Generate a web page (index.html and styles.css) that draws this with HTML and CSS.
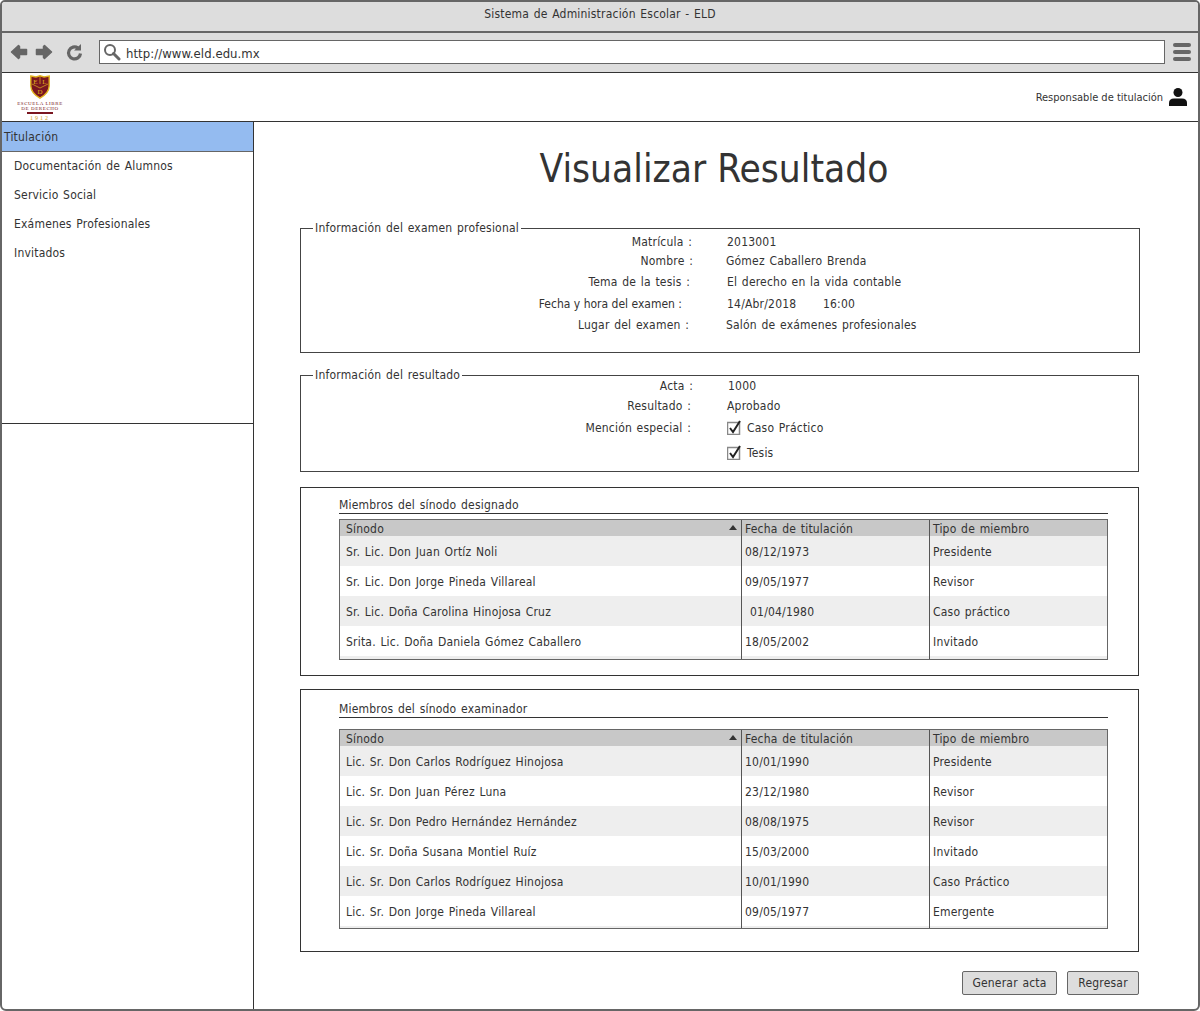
FILE: index.html
```html
<!DOCTYPE html>
<html lang="es">
<head>
<meta charset="utf-8">
<title>Visualizar Resultado</title>
<link rel="stylesheet" href="styles.css">
</head>
<body>
<div class="window">
  <div class="titlebar">Sistema de Administración Escolar - ELD</div>
  <div class="toolbar">
    <svg class="nav" width="76" height="20" viewBox="0 0 76 20" aria-hidden="true">
      <path d="M1.500 10 L8.500 3.500 L9.500 4.500 L9.500 7.500 L16.500 7.500 L16.500 12.500 L9.500 12.500 L9.500 15.500 L8.500 16.500 Z" fill="#666" stroke="#666" stroke-linejoin="round" stroke-width="1.500"/>
      <path d="M41.500 10 L34.500 3.500 L33.500 4.500 L33.500 7.500 L26.500 7.500 L26.500 12.500 L33.500 12.500 L33.500 15.500 L34.500 16.500 Z" fill="#666" stroke="#666" stroke-linejoin="round" stroke-width="1.500"/>
      <path d="M68 6 A6 6 0 1 0 70.500 11.500" fill="none" stroke="#666" stroke-width="3.200"/>
      <path d="M64 8.500 L71 8.500 L71 2 Z" fill="#666"/>
    </svg>
    <div class="urlbar">
      <svg width="18" height="18" viewBox="0 0 18 18" aria-hidden="true">
        <circle cx="7" cy="7" r="5" fill="none" stroke="#666" stroke-width="2"/>
        <path d="M10.500 10.500 L16 16" stroke="#666" stroke-width="3" stroke-linecap="round"/>
      </svg>
      <span>http://www.eld.edu.mx</span>
    </div>
    <div class="burger"><i></i><i></i><i></i></div>
  </div>
  <header class="apphead">
    <div class="logo">
      <svg width="20" height="24" viewBox="0 0 20 24" aria-hidden="true">
        <path d="M0.800 1 L6 2 L10 0.800 L14 2 L19.200 1 V11 Q19 18 10 23.200 Q1 18 0.800 11 Z" fill="#7a1620" stroke="#e0b21e" stroke-width="1.400"/>
        <path d="M10 2 V9 M2 9 L10 13 L18 9" fill="none" stroke="#e0b21e" stroke-width="0.700"/>
        <text class="crest" x="5.500" y="8.500" text-anchor="middle">E</text>
        <text class="crest" x="14.500" y="8.500" text-anchor="middle">L</text>
        <text class="crest" x="10" y="19" text-anchor="middle">D</text>
      </svg>
      <div class="logo-t1">ESCUELA LIBRE</div>
      <div class="logo-t2">DE DERECHO</div>
      <div class="logo-bar"></div>
      <div class="logo-year">1912</div>
    </div>
    <div class="user">
      <span>Responsable de titulación</span>
      <svg width="20" height="20" viewBox="0 0 20 20" aria-hidden="true">
        <circle cx="10" cy="5.500" r="4.500" fill="#111"/>
        <path d="M1 19 V16 Q1 11.500 6 11.500 H14 Q19 11.500 19 16 V19 Z" fill="#111"/>
      </svg>
    </div>
  </header>
  <div class="body">
    <aside class="side">
      <nav class="menu">
        <div class="menu-active">Titulación</div>
        <div class="menu-item">Documentación de Alumnos</div>
        <div class="menu-item">Servicio Social</div>
        <div class="menu-item">Exámenes Profesionales</div>
        <div class="menu-item">Invitados</div>
      </nav>
    </aside>
    <main class="main">
      <h1>Visualizar Resultado</h1>

      <fieldset class="box box-exam">
        <legend>Información del examen profesional</legend>
        <div class="row r1"><span class="lab">Matrícula :</span><span class="val">2013001</span></div>
        <div class="row r2"><span class="lab">Nombre :</span><span class="val">Gómez Caballero Brenda</span></div>
        <div class="row r3"><span class="lab">Tema de la tesis :</span><span class="val">El derecho en la vida contable</span></div>
        <div class="row r4"><span class="lab">Fecha y hora del examen :</span><span class="val">14/Abr/2018 <b class="time">16:00</b></span></div>
        <div class="row r5"><span class="lab">Lugar del examen :</span><span class="val">Salón de exámenes profesionales</span></div>
      </fieldset>

      <fieldset class="box box-res">
        <legend>Información del resultado</legend>
        <div class="row r6"><span class="lab">Acta :</span><span class="val">1000</span></div>
        <div class="row r7"><span class="lab">Resultado :</span><span class="val">Aprobado</span></div>
        <div class="row r8"><span class="lab">Mención especial :</span><span class="val check"><svg width="14" height="15" viewBox="0 0 14 15" aria-hidden="true"><rect x="0.500" y="2.500" width="12" height="12" fill="#fff" stroke="#888" stroke-width="1.500"/><path d="M3 8 L6 12 L13 1" fill="none" stroke="#222" stroke-width="2"/></svg>Caso Práctico</span></div>
        <div class="row r9"><span class="lab"></span><span class="val check"><svg width="14" height="15" viewBox="0 0 14 15" aria-hidden="true"><rect x="0.500" y="2.500" width="12" height="12" fill="#fff" stroke="#888" stroke-width="1.500"/><path d="M3 8 L6 12 L13 1" fill="none" stroke="#222" stroke-width="2"/></svg>Tesis</span></div>
      </fieldset>

      <section class="panel panel-a">
        <div class="ptitle">Miembros del sínodo designado</div>
        <div class="grid">
          <div class="tr head"><div>Sínodo<i class="sort"></i></div><div>Fecha de titulación</div><div>Tipo de miembro</div></div>
          <div class="tr alt"><div>Sr. Lic. Don Juan Ortíz Noli</div><div>08/12/1973</div><div>Presidente</div></div>
          <div class="tr"><div>Sr. Lic. Don Jorge Pineda Villareal</div><div>09/05/1977</div><div>Revisor</div></div>
          <div class="tr alt"><div>Sr. Lic. Doña Carolina Hinojosa Cruz</div><div class="nudge">01/04/1980</div><div>Caso práctico</div></div>
          <div class="tr"><div>Srita. Lic. Doña Daniela Gómez Caballero</div><div>18/05/2002</div><div>Invitado</div></div>
          <div class="tr tail"><div></div><div></div><div></div></div>
        </div>
      </section>

      <section class="panel panel-b">
        <div class="ptitle">Miembros del sínodo examinador</div>
        <div class="grid">
          <div class="tr head"><div>Sínodo<i class="sort"></i></div><div>Fecha de titulación</div><div>Tipo de miembro</div></div>
          <div class="tr alt"><div>Lic. Sr. Don Carlos Rodríguez Hinojosa</div><div>10/01/1990</div><div>Presidente</div></div>
          <div class="tr"><div>Lic. Sr. Don Juan Pérez Luna</div><div>23/12/1980</div><div>Revisor</div></div>
          <div class="tr alt"><div>Lic. Sr. Don Pedro Hernández Hernández</div><div>08/08/1975</div><div>Revisor</div></div>
          <div class="tr"><div>Lic. Sr. Doña Susana Montiel Ruíz</div><div>15/03/2000</div><div>Invitado</div></div>
          <div class="tr alt"><div>Lic. Sr. Don Carlos Rodríguez Hinojosa</div><div>10/01/1990</div><div>Caso Práctico</div></div>
          <div class="tr"><div>Lic. Sr. Don Jorge Pineda Villareal</div><div>09/05/1977</div><div>Emergente</div></div>
          <div class="tr tail"><div></div><div></div><div></div></div>
        </div>
      </section>

      <div class="actions">
        <button class="btn btn-a" type="button">Generar acta</button>
        <button class="btn btn-b" type="button">Regresar</button>
      </div>
    </main>
  </div>
</div>
</body>
</html>
```
FILE: styles.css
```css
* { box-sizing: border-box; }
html, body { margin: 0; padding: 0; background: #fff; }
body { width: 1200px; height: 1011px; overflow: hidden; font-family: "DejaVu Sans Condensed", "DejaVu Sans", sans-serif; font-stretch: condensed; font-size: 12px; letter-spacing: 0.2px; word-spacing: 1px; color: #333; }
.window { width: 1200px; height: 1011px; border: 2px solid #666; border-radius: 5px 5px 6px 6px; overflow: hidden; display: flex; flex-direction: column; background: #fff; }
.titlebar { height: 31px; flex: none; background: #ddd; border-bottom: 2px solid #666; text-align: center; line-height: 25px; }
.toolbar { height: 40px; flex: none; background: #ddd; border-bottom: 1px solid #333; display: flex; align-items: center; padding: 0 0 0 8px; }
.nav { flex: none; margin-right: 13px; margin-top: -1px; }
.urlbar { width: 1066px; height: 24px; background: #fff; border: 1px solid #666; display: flex; align-items: center; gap: 5px; padding: 0 0 0 3px; font-size: 13px; letter-spacing: 0.05px; color: #333; margin-top: -1px; }
.urlbar svg { flex: none; }
.urlbar span { position: relative; top: 1px; }
.burger { width: 18px; margin-left: 8px; display: flex; flex-direction: column; gap: 3px; margin-top: -1px; }
.burger i { display: block; height: 4px; background: #666; border-radius: 2px; }
.apphead { height: 49px; flex: none; border-bottom: 1px solid #333; display: flex; justify-content: space-between; align-items: flex-start; padding: 2px 10px 0 15px; }
.logo { width: 46px; display: flex; flex-direction: column; align-items: center; color: #7a1620; font-family: "Liberation Serif", serif; font-size: 5px; line-height: 5px; white-space: nowrap; letter-spacing: 0.6px; word-spacing: 0; }
.logo svg { display: block; margin-bottom: 2px; }
.crest { font-family: "Liberation Serif", serif; font-size: 7px; fill: #e0b21e; letter-spacing: 0; }
.logo-bar { width: 26px; height: 2px; background: #7a1620; margin: 1px 0; }
.logo-year { color: #d0a020; letter-spacing: 2px; line-height: 6px; font-size: 6px; }
.user { display: flex; align-items: center; gap: 5px; font-size: 11px; letter-spacing: 0; word-spacing: 0; margin-top: 12px; }
.body { flex: 1; display: flex; min-height: 0; }
.side { width: 252px; flex: none; border-right: 1px solid #333; }
.menu { height: 302px; border-bottom: 1px solid #333; }
.menu-active { height: 30px; background: #94bbf0; border-bottom: 1px solid #666; padding-left: 2px; line-height: 30px; }
.menu-item { height: 29px; padding-left: 12px; line-height: 28px; }
.main { flex: 1; padding: 0 0 0 46px; min-width: 0; }
h1 { margin: 0; height: 98px; padding: 22px 70px 0 0; font-size: 38.500px; letter-spacing: 0; word-spacing: 0; line-height: 50px; font-weight: 400; text-align: center; }
.box { margin: 0; padding: 0; border: 1px solid #444; width: 840px; min-width: 0; }
.box legend { margin-left: 12px; padding: 0 2px; line-height: 16px; }
.box-exam { height: 133px; }
.box-res { width: 839px; height: 105px; margin-top: 14px; }
.row { display: flex; }
.lab { width: 392px; text-align: right; flex: none; }
.val { margin-left: 34px; }
.time { font-weight: 400; margin-left: 22px; }
.r1 { height: 19px; margin-top: -1px; }
.r1 .lab { padding-right: 1px; }
.r2 { height: 21px; }
.r2 .val { margin-left: 33px; }
.r3 { height: 22px; }
.r3 .lab { padding-right: 3px; }
.r4 { height: 21px; }
.r4 .lab { padding-right: 11px; letter-spacing: 0; word-spacing: 0; }
.r5 { height: 20px; }
.r5 .lab { padding-right: 4px; }
.r5 .val { margin-left: 33px; }
.r6 { height: 20px; margin-top: -4px; }
.r6 .val { margin-left: 35px; }
.r7 { height: 22px; }
.r7 .lab { padding-right: 2px; }
.r8 { height: 25px; }
.r8 .lab { padding-right: 2px; }
.r9 { height: 20px; }
.check { display: flex; align-items: flex-start; gap: 6px; }
.check svg { margin-top: -1px; }
.panel { width: 839px; border: 1px solid #333; margin-top: 15px; padding: 0 30px 0 38px; }
.panel-a { height: 189px; }
.panel-b { height: 263px; margin-top: 13px; }
.ptitle { height: 26px; line-height: 34px; border-bottom: 1px solid #333; }
.panel-b .ptitle { height: 28px; line-height: 38px; }
.grid { margin-top: 5px; border: 1px solid #666; width: 769px; }
.panel-b .grid { margin-top: 11px; }
.tr { display: grid; grid-template-columns: 401px 188px 1fr; height: 30px; }
.tr > div { padding-left: 3px; line-height: 33px; height: 30px; border-left: 1px solid #555; position: relative; }
.tr > div:first-child { padding-left: 6px; border-left: 0; }
.tr.head { height: 16px; background: #c8c8c8; }
.tr.head > div { line-height: 18px; height: 16px; }
.alt { background: #eee; }
.tr > .nudge { padding-left: 8px; }
.sort { position: absolute; right: 4px; top: 5px; border: 4px solid transparent; border-top: 0; border-bottom: 5px solid #333; }
.tr.tail { height: 3px; background: #eee; }
.tr.tail > div { height: 3px; }
.panel-b .tr.tail { height: 2px; }
.panel-b .tr.tail > div { height: 2px; }
.actions { width: 839px; display: flex; justify-content: flex-end; gap: 10px; margin-top: 19px; }
.btn { height: 24px; background: #ddd; border: 1px solid #666; border-radius: 2px; font: inherit; letter-spacing: inherit; word-spacing: inherit; color: #333; padding: 0; }
.btn-a { width: 95px; }
.btn-b { width: 72px; }
```
